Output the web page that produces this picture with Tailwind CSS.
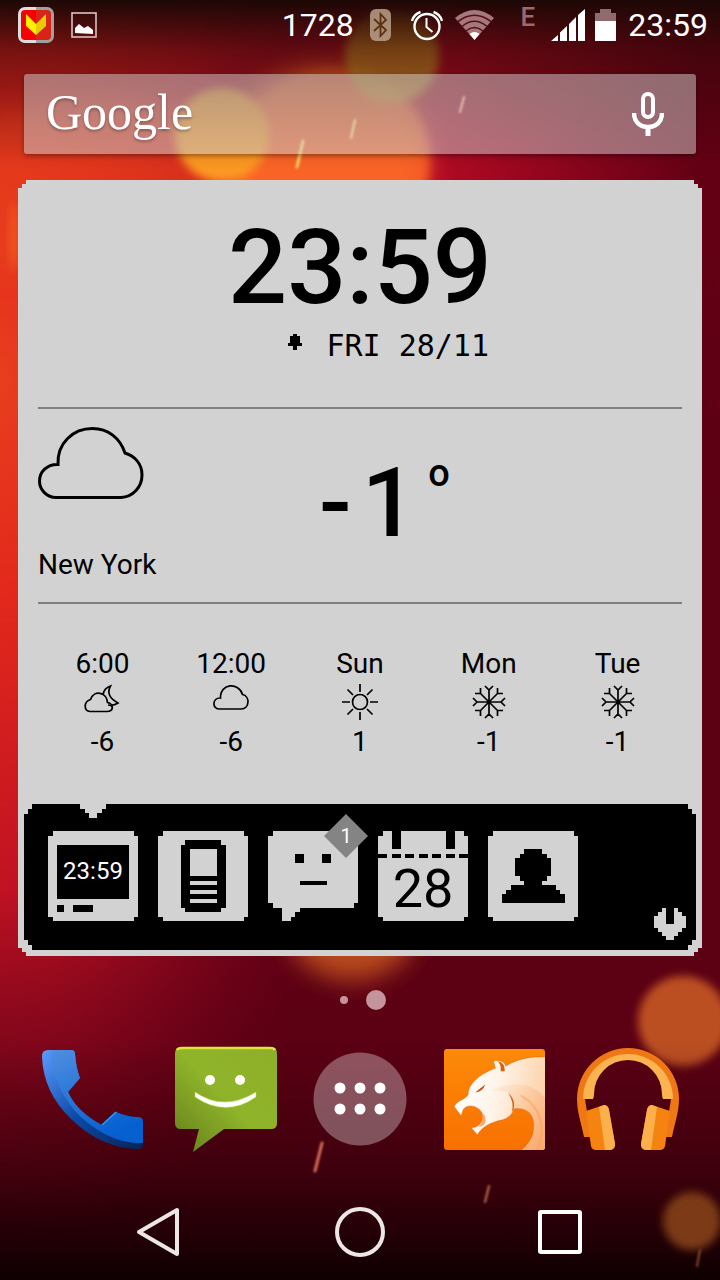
<!DOCTYPE html>
<html lang="en">
<head>
<meta charset="utf-8">
<meta name="viewport" content="width=device-width, initial-scale=1">
<title>Home screen</title>
<script src="https://cdn.jsdelivr.net/npm/@tailwindcss/browser@4"></script>
</head>
<body class="bg-[#5c0014] font-['Roboto',sans-serif]">
<div class="relative isolate flex min-h-screen flex-col overflow-hidden">

  <!-- Wallpaper -->
  <svg class="absolute inset-0 -z-10 size-full" viewBox="0 0 720 1280" preserveAspectRatio="none" aria-hidden="true">
    <defs>
      <linearGradient id="base" x1="0" x2="1" y1="0" y2="0"><stop offset="0" stop-color="#b00a22"/><stop offset=".6" stop-color="#b30a24"/><stop offset=".97" stop-color="#640014"/></linearGradient>
      <linearGradient id="low" x1="0" x2="0" y1="0" y2="1"><stop offset=".15" stop-color="#5c0014" stop-opacity="0"/><stop offset=".4" stop-color="#5c0014"/></linearGradient>
      <radialGradient id="glow" gradientUnits="userSpaceOnUse" cx="0" cy="0" r="1" gradientTransform="translate(0 380) scale(430 880)"><stop offset="0" stop-color="#e83e1e"/><stop offset=".25" stop-color="#e2281c"/><stop offset=".58" stop-color="#c01222"/><stop offset="1" stop-color="#70001c" stop-opacity="0"/></radialGradient>
      <linearGradient id="top" x1="0" x2="0" y1="0" y2="1"><stop offset="0" stop-color="#1c0805"/><stop offset=".3" stop-color="#2a0805" stop-opacity=".55"/><stop offset="1" stop-color="#300805" stop-opacity="0"/></linearGradient>
      <linearGradient id="bot" x1="0" x2="0" y1="0" y2="1"><stop offset="0" stop-color="#0c0000" stop-opacity="0"/><stop offset=".5" stop-color="#100000" stop-opacity=".35"/><stop offset="1" stop-color="#0a0000" stop-opacity=".95"/></linearGradient>
      <filter id="b4" x="-30%" y="-30%" width="160%" height="160%"><feGaussianBlur stdDeviation="4"/></filter>
      <filter id="b12" x="-30%" y="-30%" width="160%" height="160%"><feGaussianBlur stdDeviation="12"/></filter>
      <filter id="b1" x="-100%" y="-30%" width="300%" height="160%"><feGaussianBlur stdDeviation="1"/></filter>
    </defs>
    <rect width="720" height="1280" fill="url(#base)"/>
    <rect width="720" height="1280" fill="url(#low)"/>
    <rect width="720" height="1280" fill="url(#glow)"/>
    <ellipse cx="90" cy="190" rx="200" ry="90" fill="#e84a1e" opacity=".5" filter="url(#b12)"/>
    <circle cx="325" cy="165" r="100" fill="#fb6a28" filter="url(#b12)"/>
    <circle cx="337" cy="160" r="92" fill="#fa6226" opacity=".8" filter="url(#b4)"/>
    <circle cx="222" cy="135" r="47" fill="#fb9824" filter="url(#b4)"/>
    <circle cx="392" cy="56" r="47" fill="#d8a028" opacity=".8" filter="url(#b4)"/>
    <ellipse cx="14" cy="236" rx="5" ry="34" fill="#fa6a26" opacity=".5" filter="url(#b4)"/>
    <ellipse cx="352" cy="920" rx="68" ry="60" fill="#b8481f" filter="url(#b12)"/>
    <circle cx="683" cy="1021" r="45" fill="#bc4f22" filter="url(#b4)"/>
    <rect width="720" height="170" fill="url(#top)"/>
    <rect y="1040" width="720" height="240" fill="url(#bot)"/>
    <circle cx="692" cy="1221" r="29" fill="#7c3a18" filter="url(#b4)"/>
    <g stroke-linecap="round" filter="url(#b1)">
      <path d="M303 141l-6 26" stroke="#f5d060" stroke-width="3"/>
      <path d="M355 120l-4 18" stroke="#f8e080" stroke-width="2"/>
      <path d="M464 97l-4 15" stroke="#ffb090" stroke-width="2"/>
      <path d="M322 1143l-7 28" stroke="#e0705a" stroke-width="3"/>
      <path d="M489 1186l-4 16" stroke="#c07050" stroke-width="2"/>
      <path d="M700 1250l-3 16" stroke="#8a4a34" stroke-width="2"/>
    </g>
  </svg>

  <header class="flex h-[50px] items-center pr-3 pl-[18px] text-[32px] leading-none text-white">
    <svg class="size-9" viewBox="0 0 36 36" aria-label="App notification" role="img">
      <path d="M7 0H18V36H7a7 7 0 0 1-7-7V7a7 7 0 0 1 7-7Z" fill="#dedede"/><path d="M18 0H29a7 7 0 0 1 7 7V29a7 7 0 0 1-7 7H18Z" fill="#a0a0a0"/>
      <path d="M7 3H18V33H7a4 4 0 0 1-4-4V7a4 4 0 0 1 4-4Z" fill="#f80000"/><path d="M18 3H29a4 4 0 0 1 4 4V29a4 4 0 0 1-4 4H18Z" fill="#d82418"/>
      <path d="M8 7 18 17V28L8 19Z" fill="#fff200"/><path d="M28 7 18 17V28L28 19Z" fill="#e8cc00"/>
    </svg>
    <svg class="ml-[17px] size-[26px]" viewBox="0 0 26 26" role="img" aria-label="Screenshot saved"><rect x="1" y="1" width="24" height="24" fill="none" stroke="#d8c4c0" stroke-width="1.6"/><path d="M4 21V16l4-4 5 4 4-2 5 4v4Z" fill="#fff"/></svg>
    <span class="ml-auto">1728</span>
    <svg class="ml-4 h-8 w-[21px]" viewBox="0 0 21 32" role="img" aria-label="Bluetooth"><rect width="21" height="32" rx="6" fill="#b9a08a" fill-opacity=".85"/><path d="M4 10 16 21 10.500 27V5L16 11 4 22" fill="none" stroke="#5c3010" stroke-width="1.8"/></svg>
    <svg class="ml-5 h-8 w-8" viewBox="0 0 32 32" fill="none" stroke="#fff" role="img" aria-label="Alarm"><circle cx="16" cy="17.500" r="12.500" stroke-width="2.400"/><path d="M15.500 9v9l6 5" stroke-width="2"/><path d="M1 12Q3 5 9.500 3M31 12Q29 5 22.500 3" stroke-width="2.400"/></svg>
    <svg class="ml-3 h-[30px] w-[39px]" viewBox="0 0 39 30" role="img" aria-label="Wi-Fi"><path d="M0 8Q19.500-8 39 8L19.500 30Z" fill="#a4787c"/><g fill="none" stroke="#5c0c14" stroke-width="1.600"><path d="M3 11.500Q19.500-1 36 11.500"/><path d="M7 16.500Q19.500 6 32 16.500"/><path d="M11 21Q19.500 14 28 21"/></g><path d="M14.500 24Q19.500 20 24.500 24L19.500 30Z" fill="#fff"/></svg>
    <span class="mb-4 ml-[27px] text-[26px] font-medium text-[#a0686c]">E</span>
    <svg class="ml-4 h-8 w-[34px]" viewBox="0 0 34 32" fill="#fff" role="img" aria-label="Signal"><path d="M0 32 7 26V32ZM9 32V23.500L16 17V32ZM18 32V15L25 8V32ZM27 32V6L34 0V32Z"/></svg>
    <svg class="ml-[10px] h-8 w-[21px]" viewBox="0 0 21 32" role="img" aria-label="Battery"><path d="M0 12V4H5V0H16V4H21V12Z" fill="#8f6a6e"/><path d="M0 12H21V32H0Z" fill="#fff"/></svg>
    <time class="ml-3">23:59</time>
  </header>

  <form class="mx-6 mt-6 flex h-20 items-center justify-between rounded-[3px] bg-[#d2d2d2]/50 pr-8 pl-[22px] shadow-[0_2px_4px_rgba(0,0,0,.35)]" role="search">
    <button type="button" class="pb-1 font-['Liberation_Serif',serif] text-[50px] leading-none text-white [text-shadow:0_2px_3px_rgba(0,0,0,.3)]">Google</button>
    <button type="button" aria-label="Voice search">
      <svg class="h-11 w-8" viewBox="0 0 32 44" fill="none" stroke="#fff"><rect x="11" y="2" width="10" height="23" rx="5" stroke-width="4"/><path d="M2 21c0 9 6 14 14 14s14-5 14-14" stroke-width="4.500"/><path d="M16 34V44" stroke-width="5"/></svg>
    </button>
  </form>

  <main class="mx-[18px] mt-[26px] bg-[#d2d2d2] px-[6px] pb-[6px] text-black [clip-path:polygon(0_8px,4px_8px,4px_4px,8px_4px,8px_0,calc(100%-8px)_0,calc(100%-8px)_4px,calc(100%-4px)_4px,calc(100%-4px)_8px,100%_8px,100%_calc(100%-8px),calc(100%-4px)_calc(100%-8px),calc(100%-4px)_calc(100%-4px),calc(100%-8px)_calc(100%-4px),calc(100%-8px)_100%,8px_100%,8px_calc(100%-4px),4px_calc(100%-4px),4px_calc(100%-8px),0_calc(100%-8px))]">
    <section class="mx-[14px] flex h-[229px] flex-col items-center border-b-2 border-[#808080] pt-[34px]">
      <time class="text-[104px] leading-[108px] font-medium">23:59</time>
      <div class="flex w-[258px] items-center justify-end gap-6 pt-1 font-['DejaVu_Sans_Mono',monospace] text-[30px] leading-10">
        <svg class="mb-2 h-4 w-[14px]" viewBox="0 0 14 16" shape-rendering="crispEdges" role="img" aria-label="Alarm set"><path d="M5 0H9V2H12V9H14V12H9V16H5V12H0V9H2V2H5Z"/></svg>
        <span>FRI 28/11</span>
      </div>
    </section>

    <section class="mx-[14px] flex h-[195px] border-b-2 border-[#808080] pt-[18px] pb-[21px] text-[28px]">
      <div class="flex w-[281px] flex-col justify-between">
        <svg class="h-[72px] w-[106px]" viewBox="0 0 106 72" fill="none" stroke="#000" stroke-width="3" role="img" aria-label="Cloudy"><path d="M18 70.500H83C95 70 104 60 104 48S96 29 87 26C82 11 70 1.500 54.500 1.500C35 1.500 19 16 20 37.500C9 37 1.500 45 1.500 54S9 70.500 18 70.500Z"/></svg>
        <h1 class="leading-8">New York</h1>
      </div>
      <p class="flex items-start pt-5 text-[96px] leading-[112px] font-medium"><span>-</span><span class="ml-[10px]">1</span><sup class="ml-3 pt-[26px] text-[38px] leading-none">o</sup></p>
    </section>

    <section class="mx-[14px] grid h-[200px] grid-cols-5 pt-[42px] text-center text-[28px] leading-9">
      <div class="flex flex-col items-center"><h2>6:00</h2>
        <svg class="mt-[2px] mb-1 h-9 w-[38px]" viewBox="0 0 38 36" fill="none" stroke="#000" stroke-width="1.700" role="img" aria-label="Cloudy night"><path d="M7 27.500H24C31 27.500 31 20 24.500 18.500C24 8 11 5.500 7.500 15.500C0 18 1 27 7 27.500Z"/><path d="M20 11Q21 4 27.500 2Q22 12 35 19Q31 22 25 21M28 23Q29 21 28 21"/></svg><p>-6</p></div>
      <div class="flex flex-col items-center"><h2>12:00</h2>
        <svg class="mt-[2px] mb-1 h-9 w-[38px]" viewBox="0 0 38 36" fill="none" stroke="#000" stroke-width="1.700" role="img" aria-label="Cloudy"><path d="M7 25H29C38 25 38 12 30.500 10.500C27-2 8-1 8.500 14C0 13.500 0 25 7 25Z"/></svg><p>-6</p></div>
      <div class="flex flex-col items-center"><h2>Sun</h2>
        <svg class="mt-[2px] mb-1 size-9" viewBox="0 0 36 36" fill="none" stroke="#000" stroke-width="1.700" role="img" aria-label="Sunny"><circle cx="18" cy="18" r="7.500"/><path d="M18 0V8M18 28V36M0 18H8M28 18H36M5.500 5.500 11 11M25 25l5.500 5.500M30.500 5.500 25 11M11 25l-5.500 5.500"/></svg><p>1</p></div>
      <div class="flex flex-col items-center"><h2>Mon</h2>
        <svg class="mt-[2px] mb-1 size-9" viewBox="0 0 36 36" fill="none" stroke="#000" stroke-width="1.700" role="img" aria-label="Snow"><g id="flake"><path d="M18 6V30M6 18H30M9.500 9.500 26.500 26.500M26.500 9.500 9.500 26.500M14 2l4 4 4-4M14 34l4-4 4 4M2 14l4 4-4 4M34 14l-4 4 4 4M4 9.500H9.500V4M32 9.500H26.500V4M4 26.500H9.500V32M32 26.500H26.500V32"/></g></svg><p>-1</p></div>
      <div class="flex flex-col items-center"><h2>Tue</h2>
        <svg class="mt-[2px] mb-1 size-9" viewBox="0 0 36 36" fill="none" stroke="#000" stroke-width="1.700" role="img" aria-label="Snow"><use href="#flake"/></svg><p>-1</p></div>
    </section>

    <nav class="flex h-[146px] items-center justify-between bg-black pr-[10px] pl-6 [clip-path:polygon(0_10px,4px_10px,4px_5px,8px_5px,8px_0,56px_0,56px_5px,61px_5px,61px_9px,65px_9px,65px_14px,73px_14px,73px_9px,78px_9px,78px_5px,82px_5px,82px_0,calc(100%-8px)_0,calc(100%-8px)_5px,calc(100%-4px)_5px,calc(100%-4px)_10px,100%_10px,100%_calc(100%-10px),calc(100%-4px)_calc(100%-10px),calc(100%-4px)_calc(100%-5px),calc(100%-8px)_calc(100%-5px),calc(100%-8px)_100%,8px_100%,8px_calc(100%-5px),4px_calc(100%-5px),4px_calc(100%-10px),0_calc(100%-10px))]" aria-label="Widget tabs">
      <div class="flex gap-5 pb-0.5">
        <button type="button" class="grid size-[90px] place-items-center" aria-label="Clock 23:59">
          <svg class="col-start-1 row-start-1 size-[90px]" viewBox="0 0 20 20" shape-rendering="crispEdges"><path fill="#d2d2d2" d="M1 0H19V1H20V19H19V20H1V19H0V1H1Z"/><path d="M2 3H18V15H2ZM2 16.500H3.500V18H2ZM5.500 16.500H10V18H5.500Z"/></svg>
          <span class="col-start-1 row-start-1 pb-[10px] text-[24px] leading-none text-white">23:59</span>
        </button>
        <button type="button" aria-label="Phone">
          <svg class="size-[90px]" viewBox="0 0 20 20" shape-rendering="crispEdges"><path fill="#d2d2d2" d="M1 0H19V1H20V19H19V20H1V19H0V1H1Z"/><path d="M6 2H14V3H15V17H14V18H6V17H5V3H6Z"/><path fill="#d2d2d2" d="M7 4H13V10H7ZM7 11H13V12H7ZM7 13H13V14H7ZM7 15H13V16H7Z"/></svg>
        </button>
        <button type="button" class="relative" aria-label="Messages, 1 unread">
          <svg class="size-[90px]" viewBox="0 0 20 20" shape-rendering="crispEdges"><path fill="#d2d2d2" d="M1 0H19V1H20V16H19V17H7V18H6V19H5V20H3V17H1V16H0V1H1Z"/><path d="M6 5H8V7H6ZM12 5H14V7H12ZM7 11H13V12H7Z"/></svg>
          <span class="absolute -top-[17px] -right-[10px] grid size-11 place-items-center bg-[#848484] text-[20px] leading-none text-white [clip-path:polygon(50%_0,100%_50%,50%_100%,0_50%)]">1</span>
        </button>
        <button type="button" class="grid size-[90px] place-items-center" aria-label="Calendar, 28">
          <svg class="col-start-1 row-start-1 size-[90px]" viewBox="0 0 20 20" shape-rendering="crispEdges"><path fill="#d2d2d2" d="M1 0H19V1H20V19H19V20H1V19H0V1H1Z"/><path d="M3 0H5V4H3ZM15 0H17V4H15ZM0 5H2V6H0ZM3 5H5V6H3ZM6 5H8V6H6ZM9 5H11V6H9ZM12 5H14V6H12ZM15 5H17V6H15ZM18 5H20V6H18Z"/></svg>
          <span class="col-start-1 row-start-1 pt-[26px] text-[54px] leading-none">28</span>
        </button>
        <button type="button" aria-label="Contacts">
          <svg class="size-[90px]" viewBox="0 0 20 20" shape-rendering="crispEdges"><path fill="#d2d2d2" d="M1 0H19V1H20V19H19V20H1V19H0V1H1Z"/><path d="M8 4H12V5H13V6H14V10H13V11H12V12H15V13H16V14H17V16H3V14H4V13H5V12H8V11H7V10H6V6H7V5H8Z"/></svg>
        </button>
      </div>
      <button type="button" class="mb-[10px] self-end" aria-label="Widget settings">
        <svg class="size-8" viewBox="0 0 8 8" fill="#d2d2d2" shape-rendering="crispEdges"><path d="M2 0H3V4H5V0H6V1H7V2H8V5H7V6H6V7H5V8H3V7H2V6H1V5H0V2H1V1H2Z"/></svg>
      </button>
    </nav>
  </main>

  <div class="flex items-center justify-center gap-[18px] pt-[34px] pl-[6px]" aria-label="Page 2 of 2">
    <span class="size-2 rounded-full bg-[#c4949c]"></span><span class="size-5 rounded-full bg-[#c4949c]"></span>
  </div>

  <nav class="mx-[25px] mt-9 grid grid-cols-5 justify-items-center" aria-label="Dock">
    <button type="button" aria-label="Phone">
      <svg class="size-[106px]" viewBox="0 0 106 106"><defs><linearGradient id="ph" x1="0" x2=".4" y1="0" y2="1"><stop stop-color="#4f8ee0"/><stop offset="1" stop-color="#0660d0"/></linearGradient><linearGradient id="pe" x1="0" x2="1" y1="0" y2="1"><stop stop-color="#5a9cff"/><stop offset=".5" stop-color="#0c4aa8"/><stop offset="1" stop-color="#062458"/></linearGradient></defs>
        <path d="M9 4H32Q36 4 36 8Q37 22 41 32L29 46Q38 66 63 79L77 66Q88 71 99 71Q104 71 104 76V98Q104 103 98 103Q62 102 32 73Q4 46 3 10Q3 4 9 4Z" fill="url(#pe)"/>
        <path d="M12 4H32Q36 4 36 8Q37 22 41 32L29 46Q38 66 63 79L77 66Q88 71 99 71Q104 71 104 76V97Q72 98 43 72Q14 45 12 4Z" fill="url(#ph)"/><path d="M63 79L77 66" stroke="#28a0ff" stroke-width="1.500"/></svg>
    </button>
    <button type="button" aria-label="Messaging">
      <svg class="size-[106px]" viewBox="0 0 106 106"><defs><linearGradient id="ms" x1="1" x2="0" y1="0" y2="1"><stop stop-color="#8fae28"/><stop offset=".5" stop-color="#8fb42a"/><stop offset="1" stop-color="#647e1c"/></linearGradient></defs>
        <path d="M8 1H98Q104 1 104 8V77Q104 83 98 83H51L20 106L26 83H8Q2 83 2 77V8Q2 1 8 1Z" fill="url(#ms)"/><path d="M4 4Q5 2 9 2H97Q101 2 102 4" fill="none" stroke="#d8e838" stroke-width="2.500"/>
        <circle cx="37" cy="34" r="5" fill="#fff"/><circle cx="67" cy="34" r="5" fill="#fff"/><path d="M22 46Q51 66 83 46V51Q53 72 22 51Z" fill="#fff" stroke="#b8e030" stroke-width=".5"/></svg>
    </button>
    <button type="button" aria-label="All apps" class="self-center">
      <svg class="size-[94px]" viewBox="0 0 94 94"><circle cx="47" cy="47" r="46.500" fill="#fff" fill-opacity=".32"/><g fill="#fff"><circle cx="27" cy="36" r="5.500"/><circle cx="47" cy="36" r="5.500"/><circle cx="67" cy="36" r="5.500"/><circle cx="27" cy="57" r="5.500"/><circle cx="47" cy="57" r="5.500"/><circle cx="67" cy="57" r="5.500"/></g></svg>
    </button>
    <button type="button" aria-label="Browser" class="self-center">
      <svg class="size-[101px]" viewBox="0 0 100 100"><defs><linearGradient id="cm" x1="0" x2="0" y1="0" y2="1"><stop stop-color="#fc8a08"/><stop offset="1" stop-color="#f87000"/></linearGradient><linearGradient id="ct" x1="0" x2="1" y1="0" y2=".2"><stop stop-color="#fff"/><stop offset=".5" stop-color="#fff4ea"/><stop offset="1" stop-color="#fcd4ac"/></linearGradient><linearGradient id="cn" x1="0" x2="1" y1="0" y2="1"><stop stop-color="#fff0e0"/><stop offset=".5" stop-color="#fcc090"/><stop offset="1" stop-color="#f89850"/></linearGradient><clipPath id="cc"><rect width="100" height="100" rx="3"/></clipPath></defs>
        <g clip-path="url(#cc)"><rect width="100" height="100" fill="url(#cm)"/>
        <path d="M101 8C86 7 72 10 61 17C60 12 55 11 49 12L51 19C40 23 24 32 24 45C20 51 14 50 10 57L17 66L19 60C24 53 35 57 38 64C40 72 34 78 27 78L33 85C38 76 48 72 58 70C65 68 69 63 69 59C82 57 90 65 89 77C89 88 83 95 76 101H101Z" fill="url(#ct)" stroke="#c85000" stroke-opacity=".25"/>
        <path d="M44 42Q62 33 80 36Q93 38 101 50V101H76C83 95 89 88 89 77C90 65 82 57 69 59Q68 50 63 43Q54 40 44 42Z" fill="url(#cn)" opacity=".75"/>
        <path d="M76 46Q96 58 97 80Q97 92 91 101" stroke="#f8a060" stroke-width="2" fill="none" opacity=".5"/>
        <path d="M41 35L31 43Q38 43 41 35Z" fill="#c04e10"/><path d="M63 43Q70 52 67 63L69 59Q71 50 63 43ZM53 12Q57 16 56 22L60 22Q61 14 53 12Z" fill="#d86010"/><path d="M38 64Q40 72 34 77Q44 76 40 65Z" fill="#fca868"/></g></svg>
    </button>
    <button type="button" aria-label="Music">
      <svg class="size-[106px]" viewBox="0 0 106 106"><path d="M9 91C6 76 2 66 2 53A51 51 0 0 1 104 53C104 66 100 76 97 91H90L96 53A43 43 0 0 0 10 53L16 91Z" fill="#f07814"/><path d="M8 53A45 45 0 0 1 98 53H88Q87 51 87 48A34 34 0 0 0 19 48Q19 51 18 53Z" fill="#fcb450"/>
        <path d="M11 65 29 59Q33 59 34 64L40 98Q40 104 34 104H21Q17 104 16 100Z" fill="#f4840f"/><path d="M24 61 29 59Q33 59 34 64L40 98Q40 104 34 104H30Z" fill="#fcb04c"/>
        <path d="M95 65 77 59Q73 59 72 64L66 98Q66 104 72 104H85Q89 104 90 100Z" fill="#f4840f"/><path d="M82 61 77 59Q73 59 72 64L66 98Q66 104 72 104H76Z" fill="#fcb04c"/></svg>
    </button>
  </nav>

  <nav class="mx-[60px] mt-auto grid h-24 grid-cols-3 place-items-center" aria-label="System navigation">
    <button type="button" aria-label="Back"><svg class="size-[50px]" viewBox="0 0 50 50" fill="none" stroke="#ece6e6" stroke-width="4" stroke-linejoin="round"><path d="M42 3V47L4 25Z"/></svg></button>
    <button type="button" aria-label="Home"><svg class="size-[50px]" viewBox="0 0 50 50" fill="none" stroke="#ece6e6" stroke-width="4"><circle cx="25" cy="25" r="23"/></svg></button>
    <button type="button" aria-label="Recent apps"><svg class="size-[50px]" viewBox="0 0 50 50" fill="none" stroke="#fff" stroke-width="4"><rect x="5" y="5" width="40" height="40" rx="1"/></svg></button>
  </nav>
</div>
</body>
</html>
